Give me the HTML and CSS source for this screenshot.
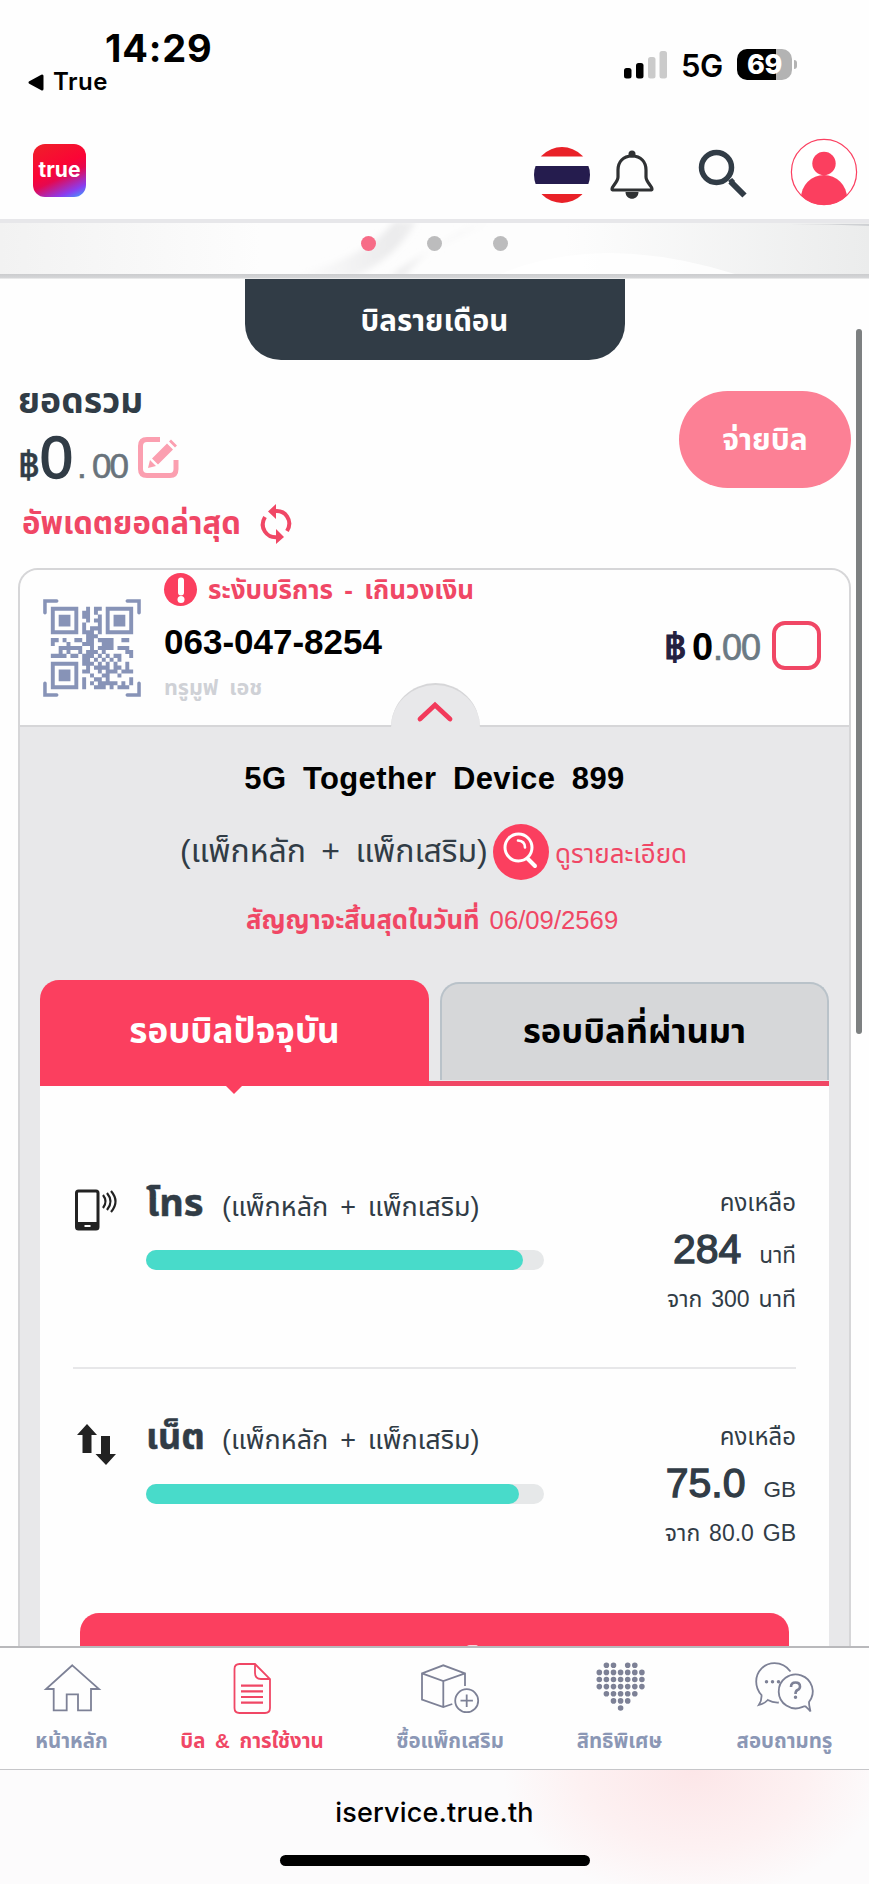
FILE: index.html
```html
<!DOCTYPE html>
<html lang="th">
<head>
<meta charset="utf-8">
<title>iService</title>
<link rel="stylesheet" href="styles.css">
</head>
<body>
<div class="screen">
  <div class="status">
    <div class="status-left">
      <div class="clock">14:29</div>
      <div class="back"><svg width="16" height="17" viewBox="0 0 16 17"><path d="M14 2v13L2 8.500z" fill="#000" stroke="#000" stroke-width="3" stroke-linejoin="round"/></svg><span>True</span></div>
    </div>
    <div class="status-right">
      <svg class="signal" width="43" height="28" viewBox="0 0 43 28"><g fill="#000"><rect x="0" y="17" width="7.500" height="10.500" rx="2.500"/><rect x="12" y="12" width="7.500" height="15.500" rx="2.500"/></g><g fill="#cbcbcb"><rect x="24" y="6" width="7.500" height="21.500" rx="2.500"/><rect x="35.500" y="0" width="7.500" height="27.500" rx="2.500"/></g></svg>
      <span class="net">5G</span>
      <span class="battery">69</span><i class="nub"></i>
    </div>
  </div>

  <header class="header">
    <div class="logo">true</div>
    <svg class="flag" width="56" height="56" viewBox="0 0 56 56"><clipPath id="fc"><circle cx="28" cy="28" r="28"/></clipPath><g clip-path="url(#fc)"><path fill="#fff" d="M0 0h56v56H0z"/><path fill="#e92128" d="M0 0h56v9.500H0zM0 47h56v9H0z"/><path fill="#251c4e" d="M0 19h56v18H0z"/></g></svg>
    <svg class="bell" width="44" height="50" viewBox="0 0 44 50"><circle cx="22" cy="4" r="3.500" fill="#2f3133"/><path d="M22 6C13 6 8 12 8 20v7c0 5-6 9-6 12 0 1 1 1 2 1h36c1 0 2 0 2-1 0-3-6-7-6-12v-7C36 12 31 6 22 6z" fill="none" stroke="#2f3133" stroke-width="3.200"/><path d="M15.500 42h13c0 9-13 9-13 0z" fill="#2f3133"/></svg>
    <svg class="search" width="50" height="50" viewBox="0 0 50 50" fill="none" stroke="#313c46"><circle cx="18.500" cy="18.500" r="15" stroke-width="5.500"/><path d="M31 33l3-2 2 2" stroke-width="3"/><path d="M32.500 32.500l14 14" stroke-width="6"/></svg>
    <svg class="avatar" width="68" height="68" viewBox="0 0 68 68"><clipPath id="ac"><circle cx="34" cy="34" r="33"/></clipPath><circle cx="34" cy="34" r="32.600" fill="#fff" stroke="#fb4061" stroke-width="1.200"/><g fill="#fb3f5f" clip-path="url(#ac)"><circle cx="34" cy="25.500" r="11.700"/><circle cx="34" cy="60" r="23"/></g></svg>
  </header>

  <main class="main">
    <div class="banner">
      <svg class="silk" width="869" height="51" viewBox="0 0 869 51"><defs><linearGradient id="g1"><stop offset="0" stop-color="#f2f2f2"/><stop offset=".3" stop-color="#fdfdfd"/><stop offset=".65" stop-color="#fdfdfd"/><stop offset="1" stop-color="#ebecec"/></linearGradient><linearGradient id="g2"><stop offset="0" stop-color="#fff"/><stop offset=".5" stop-color="#ebebec"/><stop offset="1" stop-color="#fff"/></linearGradient><filter id="soft" x="-10%" y="-30%" width="120%" height="160%"><feGaussianBlur stdDeviation="3"/></filter></defs><path fill="url(#g1)" d="M0 0h869v51H0z"/><g filter="url(#soft)"><path fill="url(#g2)" d="M285 53Q360 40 395-2h22Q395 36 355 53zM390 53Q430 22 500-2h-20Q425 25 405 53z"/></g><path fill="#fff" fill-opacity=".8" d="M500 51q100-42 235 0z"/><path d="M790 1h79v2q-40-2-79-2z" fill="#cfd1d4"/></svg>
      <i class="dot on"></i><i class="dot"></i><i class="dot"></i>
    </div>
    <div class="rule"></div>
    <div class="bill-tab"><span>บิลรายเดือน</span></div>

    <section class="summary">
      <div class="summary-left">
        <div class="sum-title"><span>ยอดรวม</span></div>
        <div class="amount"><span class="baht">฿</span><span class="whole">0</span><span class="point">.</span><span class="cents">00</span>
          <svg width="41" height="41" viewBox="0 0 41 41" fill="none" stroke="#fb9fb0"><path d="M22 2.500H9Q2.500 2.500 2.500 9v23q0 6.500 6.500 6.500h23q6 0 6-6.500v-9" stroke-width="5"/><path d="M10 31l2-8 6 6z M14 21.500L29 6.500l6 6L20 27.500zM31 4.500l2-2 6 6-2 2z" fill="#fb9fb0" stroke="none"/></svg>
        </div>
        <div class="refresh"><span>อัพเดตยอดล่าสุด</span>
          <svg width="32" height="40" viewBox="0 0 32 40"><g fill="none" stroke="#f04765" stroke-width="4"><path d="M13 7.500C26 5 33 17 27 27"/><path d="M19 33C6 35 -1 23 5 13"/></g><path d="M8 7.500L16 0v15zM24 33l-8-8v15z" fill="#f04765"/></svg>
        </div>
      </div>
      <button class="pay"><span>จ่ายบิล</span></button>
    </section>

    <section class="card">
      <div class="card-head">
        <svg class="qr" width="98" height="98" viewBox="0 0 25 25" stroke="#8793b7" fill="none"><path stroke-width=".9" stroke-linecap="round" d="M.5 3.500V.5h3M21.500.5h3v3M24.500 21.500v3h-3M3.500 24.500h-3v-3"/><g transform="translate(2 2)"><path d="M.5.5h6v6h-6zM14.500.5h6v6h-6zM.5 14.500h6v6h-6z"/><path fill="#8793b7" stroke="none" d="M2 2h3v3H2zM16 2h3v3h-3zM2 16h3v3H2z"/><path stroke-width="1.040" d="M9 .5h1M11 .5h2M8 1.500h2M11 1.500h1M8 2.500h2M12 2.500h1M9 3.500h1M11 3.500h2M8 4.500h1M12 4.500h1M8 5.500h1M10 5.500h3M8 6.500h3M12 6.500h1M9 7.500h3M0 8.500h2M3 8.500h1M6 8.500h2M9 8.500h2M12 8.500h4M18 8.500h2M0 9.500h1M4 9.500h1M8 9.500h3M13 9.500h3M2 10.500h6M10 10.500h1M12 10.500h4M17 10.500h3M2 11.500h1M4 11.500h1M7 11.500h1M9 11.500h3M13 11.500h1M19 11.500h2M0 12.500h4M5 12.500h2M8 12.500h3M12 12.500h1M14 12.500h1M16 12.500h2M20 12.500h1M8 13.500h2M11 13.500h1M13 13.500h1M15 13.500h1M17 13.500h1M8 14.500h3M12 14.500h1M14 14.500h1M16 14.500h1M19 14.500h1M9 15.500h1M11 15.500h4M16 15.500h2M19 15.500h1M8 16.500h2M12 16.500h1M14 16.500h3M18 16.500h3M10 17.500h1M13 17.500h2M17 17.500h1M8 18.500h1M11 18.500h2M14 18.500h1M20 18.500h1M8 19.500h1M10 19.500h1M12 19.500h5M18 19.500h1M20 19.500h1M8 20.500h1M11 20.500h3M15 20.500h1M17 20.500h3"/></g></svg>
        <div class="info">
          <div class="alert"><svg width="33" height="33" viewBox="0 0 33 33"><circle cx="16.500" cy="16.500" r="16.500" fill="#fb3f5f"/><path d="M17 7.500v12" stroke="#fff" stroke-width="6" stroke-linecap="round"/><circle cx="17" cy="26.500" r="3.500" fill="#fff"/></svg><span>ระงับบริการ - เกินวงเงิน</span></div>
          <div class="number"><span>063-047-8254</span></div>
          <div class="owner"><span>ทรูมูฟ เอช</span></div>
        </div>
        <div class="price"><span class="p-baht">฿</span><span class="p-whole">0</span><span class="p-cents">.00</span></div>
        <i class="check"></i>
        <div class="bump"><svg width="36" height="22" viewBox="0 0 36 22"><path d="M3 18L18 4l15 14" fill="none" stroke="#f23a5b" stroke-width="4.800" stroke-linecap="round"/></svg></div>
      </div>

      <div class="panel">
        <div class="plan"><span>5G Together Device 899</span></div>
        <div class="pack"><span class="pack-name">(แพ็กหลัก + แพ็กเสริม)</span>
          <svg width="56" height="56" viewBox="0 0 56 56"><circle cx="28" cy="28" r="28" fill="#fb3f5f"/><g fill="none" stroke="#fff" stroke-linecap="round"><circle cx="25.500" cy="23.500" r="13.500" stroke-width="3"/><path d="M35 35l7 7" stroke-width="4"/><path d="M25 16.500q7 .5 7 7" stroke-width="2.600"/></g></svg>
          <span class="pack-link">ดูรายละเอียด</span></div>
        <div class="contract"><b>สัญญาจะสิ้นสุดในวันที่</b><span>06/09/2569</span></div>
        <div class="tabs">
          <div class="tab active"><span>รอบบิลปัจจุบัน</span></div>
          <div class="tab"><span>รอบบิลที่ผ่านมา</span></div>
        </div>
        <div class="usage">
          <div class="row">
            <svg class="ic" width="44" height="44" viewBox="0 0 44 44"><rect x="3.500" y="3" width="21.500" height="38" rx="2" fill="none" stroke="#222" stroke-width="3"/><path d="M3 34h22v7H3z" fill="#222"/><path d="M11.500 38h6" stroke="#fff" stroke-width="2"/><g fill="none" stroke="#222" stroke-width="2.200"><path d="M30 7q5 6.500 0 13"/><path d="M34 5q7 8.500 0 17"/><path d="M38 3q9 10.500 0 21"/></g></svg>
            <div class="mid"><div class="name"><b>โทร</b><span>(แพ็กหลัก + แพ็กเสริม)</span></div><div class="bar"><div class="fill" style="width:377px"></div></div></div>
            <div class="left"><div class="l1"><span>คงเหลือ</span></div><div class="l2"><b>284</b><span>นาที</span></div><div class="l3"><span>จาก 300 นาที</span></div></div>
          </div>
          <div class="row">
            <svg class="ic" width="44" height="44" viewBox="0 0 44 44" fill="#222"><path d="M14 2l10 11h-5.500v18h-9V13H4zM28 14h9v18h6L33 43 22.500 32H28z"/></svg>
            <div class="mid"><div class="name"><b class="net-name">เน็ต</b><span>(แพ็กหลัก + แพ็กเสริม)</span></div><div class="bar"><div class="fill" style="width:373px"></div></div></div>
            <div class="left"><div class="l1"><span>คงเหลือ</span></div><div class="l2"><b>75.0</b><span>GB</span></div><div class="l3"><span>จาก 80.0 GB</span></div></div>
          </div>
          <div class="cta"><i></i></div>
        </div>
      </div>
    </section>
  </main>

  <nav class="nav">
    <div><svg width="60" height="52" viewBox="0 0 60 52"><path d="M30.300 3.300L57 27h-8v21.300H36v-16H24.700v16h-13V27H4z"/></svg><span>หน้าหลัก</span></div>
    <div class="sel"><svg width="60" height="52" viewBox="0 0 60 52"><path d="M17.500 2H33l15 15v29q0 5-5 5H17.500q-5 0-5-5V7q0-5 5-5zM33 2v9q0 6 6 6h9"/><path stroke-width="2.200" d="M19 23.700h22M19 29.300h22M19 35h22M19 40.700h22"/></svg><span>บิล &amp; การใช้งาน</span></div>
    <div><svg width="60" height="52" viewBox="0 0 60 52"><path d="M32.300 42l-9 3L2 37.500V11.300l21.300-8L45 11.300V24M2 11.300L23.300 19 45 11.300M23.300 19v26"/><circle cx="46.700" cy="38.700" r="11.500"/><path d="M46.700 32.500v12.400M40.500 38.700h12.400"/></svg><span>ซื้อแพ็กเสริม</span></div>
    <div><svg width="60" height="52" viewBox="0 0 60 52"><path class="dots" d="M16.400 3.300h0m7.100 0h0m14.200 0h0m7.100 0h0M9.300 10.400h0m7.100 0h0m7.100 0h0m7.100 0h0m7.100 0h0m7.100 0h0m7.100 0h0M9.300 17.500h0m7.100 0h0m7.100 0h0m7.100 0h0m7.100 0h0m7.100 0h0m7.100 0h0M9.300 24.600h0m7.100 0h0m7.100 0h0m7.100 0h0m7.100 0h0m7.100 0h0m7.100 0h0M16.400 31.700h0m7.100 0h0m7.100 0h0m7.100 0h0m7.100 0h0M23.500 38.900h0m7.100 0h0m7.100 0h0M30.600 46h0"/></svg><span>สิทธิพิเศษ</span></div>
    <div><svg width="60" height="52" viewBox="0 0 60 52"><path d="M35.500 9.500C31 3.500 25.500 1.200 19.500 1.200 9 1.200 1.200 9.500 1.200 19.500c0 5.500 2 10 5.300 13.500.3 4-.7 7-2.700 10 4-1 6.200-2 9-5 3.500 2 7.500 2.700 11 2.500"/><path d="M50 44c1.500 1.500 3.500 3 5.500 5.500-.8-3.500-1.700-6.500-1.500-9.500a17 17 0 1 0-7 5.200l3-1.200"/><path stroke-width="3.500" stroke-linecap="round" d="M11.500 19.800h0M17.500 19.800h0M23.500 19.800h0M40.500 35.300h0"/><path stroke-width="2.600" d="M36 25q0-4.500 4.500-4.500T45 24.500q0 2.500-2.500 3.500-2 1-2 4"/></svg><span>สอบถามทรู</span></div>
  </nav>
  <footer class="url"><span>iservice.true.th</span><i></i></footer>
  <div class="scrollbar"></div>
</div>
</body>
</html>
```

FILE: styles.css
```css
* { box-sizing: border-box; }
body { margin: 0; }
.screen { position: relative; width: 869px; height: 1884px; overflow: hidden; background: #fefefe; color: #313c46; font-family: "Liberation Sans", "Noto Sans Thai", "Noto Sans", sans-serif; display: flex; flex-direction: column; }
span, b { white-space: pre; }
svg { display: block; flex: none; overflow: visible; }
i { display: block; flex: none; }

.status { height: 130px; flex: none; display: flex; justify-content: space-between; font-family: Inter, sans-serif; color: #000; }
.status-left { padding: 28px 0 0 28px; }
.clock { font-size: 38px; line-height: 40px; font-weight: 700; padding-left: 77px; letter-spacing: .8px; }
.back { display: flex; align-items: center; font-size: 24px; line-height: 28px; font-weight: 600; gap: 9px; letter-spacing: .5px; }
.status-right { display: flex; padding: 50px 72px 0 0; align-items: flex-start; }
.signal { margin: 1px 14px 0 0; }
.net { font-size: 31px; line-height: 32px; font-weight: 600; width: 56px; letter-spacing: -.5px; }
.battery { width: 55px; height: 31px; margin-top: -1px; border-radius: 10px; background: linear-gradient(90deg, #000 39px, #b3b3b3 39px); color: #fff; font-size: 27px; line-height: 31px; font-weight: 800; text-align: center; letter-spacing: -.3px; }
.nub { width: 3px; height: 9px; margin: 10px 0 0 2px; border-radius: 0 4px 4px 0; background: #b3b3b3; }

.header { height: 93px; flex: none; border-bottom: 4px solid #e7e7ea; display: flex; align-items: flex-start; padding: 0 10px 0 33px; }
.logo { width: 53px; height: 53px; margin-top: 14px; border-radius: 12px; background: linear-gradient(155deg, #ee2128 0%, #fb0436 45%, #e50850 60%, #8a3df0 84%, #35aaff 100%); color: #fff; font: 700 21px/51px Inter, sans-serif; text-align: center; }
.flag { margin: 17px 20px 0 448px; }
.bell { margin: 20px 44px 0 0; }
.search { margin: 19px 42px 0 0; }
.avatar { margin-top: 8px; }

.main { height: 1423px; flex: none; overflow: hidden; }
.banner { height: 51px; display: flex; align-items: flex-start; overflow: hidden; }
.silk { margin-right: -869px; }
.dot { width: 15px; height: 15px; border-radius: 50%; background: #bcbcbd; margin: 13px 51.200px 0 0; }
.dot.on { background: #f76c87; margin-left: 360.500px; }
.rule { height: 5px; background: linear-gradient(#cbccce, #d4d5d7 70%, #f3f3f3); }
.bill-tab { width: 380px; height: 81px; margin: 0 auto; border-radius: 0 0 36px 36px; background: #313c46; color: #fff; font-size: 29.500px; font-weight: 700; line-height: 83px; text-align: center; }
.summary { height: 208px; padding: 22px 18px 0; display: flex; justify-content: space-between; }
.sum-title { height: 40px; line-height: 38px; font-size: 35.500px; font-weight: 700; }
.amount { height: 60px; margin-top: 6px; line-height: 60px; display: flex; align-items: baseline; }
.baht { font-size: 37px; width: 22px; -webkit-text-stroke: .6px; }
.whole { font-size: 59px; width: 37px; -webkit-text-stroke: 1.600px; }
.point { font-size: 35px; width: 15px; color: #69737b; -webkit-text-stroke: .6px; }
.cents { font-size: 35px; width: 46px; color: #69737b; letter-spacing: -2px; -webkit-text-stroke: .6px; }
.refresh { height: 40px; margin: 16px 0 0 4px; line-height: 40px; display: flex; gap: 19px; font-size: 31px; font-weight: 700; color: #f04765; }
.pay { width: 172px; height: 97px; margin: 9px 0 0; padding: 0; border: 0; border-radius: 49px; background: #fc8095; color: #fff; font: 700 30px/97px "Liberation Sans", "Noto Sans Thai", sans-serif; }

.card { width: 833px; height: 1300px; margin-left: 18px; border: 2px solid #d6d6d8; border-radius: 20px; background: #e8e8ea; overflow: hidden; }
.card-head { position: relative; height: 157px; border-bottom: 2px solid #d6d6d8; background: #fefefe; display: flex; align-items: flex-start; padding: 0 28px 0 23px; }
.qr { margin: 29px 23px 0 0; }
.info { width: 330px; padding-top: 3px; }
.alert { display: flex; gap: 11px; height: 33px; line-height: 34px; font-size: 26px; word-spacing: 4px; font-weight: 700; color: #f04765; }
.number { margin-top: 16px; font-size: 35px; line-height: 40px; font-weight: 700; color: #000; }
.owner { margin-top: 11px; font-size: 21.500px; line-height: 30px; font-weight: 700; word-spacing: 5px; color: #cfd1d6; }
.price { margin: 53px 0 0 auto; line-height: 48px; display: flex; align-items: baseline; }
.p-baht { font-size: 38px; width: 28px; color: #24213f; -webkit-text-stroke: 1.200px; }
.p-whole { font-size: 38px; font-weight: 700; color: #000; width: 21px; }
.p-cents { font-size: 36px; color: #6c7a84; width: 50px; letter-spacing: -1px; -webkit-text-stroke: .7px; }
.check { width: 49px; height: 49px; margin: 51px 0 0 9px; border: 4px solid #f04765; border-radius: 13px; }
.bump { position: absolute; left: 370.500px; top: 113px; width: 89px; height: 46px; border-radius: 45px 45px 0 0; background: #e8e8ea; border-top: 2px solid #d6d6d8; display: flex; justify-content: center; padding-top: 16px; }

.panel { padding: 31px 20px 0; }
.plan { text-align: center; font-size: 31px; line-height: 41px; height: 40px; font-weight: 700; color: #000; letter-spacing: .4px; word-spacing: 7.500px; }
.pack { display: flex; height: 56px; margin: 26px 0 0 140px; line-height: 55px; }
.pack-name { font-size: 32px; width: 313px; word-spacing: 6.500px; }
.pack-link { font-size: 26px; margin-left: 6px; color: #f04765; line-height: 60px; }
.contract { margin: 20px 0 0 206px; height: 40px; line-height: 40px; display: flex; gap: 10px; font-size: 25.700px; color: #f04765; }
.tabs { margin-top: 40px; height: 106px; border-bottom: 5px solid #f04765; display: flex; justify-content: space-between; }
.tab { width: 389px; height: 98px; margin-top: 2px; border: 2px solid #b9c2c9; border-bottom: 0; border-radius: 19px 19px 0 0; background: #d6d7d9; color: #000; font-size: 34.500px; font-weight: 700; text-align: center; line-height: 95px; }
.tab.active { position: relative; height: 106px; margin: 0; border: 0; background: #fb3f5f; color: #fff; line-height: 102px; font-size: 35px; }
.tab.active::after { content: ""; position: absolute; left: 185px; top: 105px; border: 9px solid transparent; border-top-color: #fb3f5f; border-bottom: 0; }
.usage { height: 800px; padding: 102px 33px 0; background: #fefefe; }
.row { display: flex; height: 181px; border-bottom: 2px solid #e7e7e9; }
.row + .row { height: 244px; padding-top: 53px; border: 0; }
.ic { margin-right: 29px; }
.mid { width: 398px; margin-top: -10px; }
.name { height: 50px; line-height: 50px; display: flex; align-items: baseline; font-size: 27px; word-spacing: 4.400px; }
.name b { font-size: 38px; width: 76px; -webkit-text-stroke: .5px; }
.name .net-name { font-size: 36px; }
.bar { margin-top: 22px; height: 20px; border-radius: 10px; background: #e6e8e9; }
.fill { height: 20px; border-radius: 10px; background: #48dbca; }
.left { margin-left: auto; text-align: right; font-size: 24px; line-height: 30px; display: flex; flex-direction: column; align-items: flex-end; }
.l2 { height: 50px; margin: 6px 0 10px; line-height: 50px; display: flex; align-items: baseline; gap: 18px; font-size: 22.500px; }
.l2 b { font-size: 41px; font-weight: 400; -webkit-text-stroke: 1.300px; }
.l3 { font-size: 23px; word-spacing: 2.500px; }
.cta { height: 60px; margin: 0 7px; border-radius: 19px 19px 0 0; background: #fb3f5f; display: flex; padding: 32px 0 0 386px; }
.cta i { width: 12px; height: 6px; border-radius: 4px 2px 0 0; background: #fbd5dc; }

.nav { height: 123px; flex: none; border-top: 2px solid #b9b9bc; background: #fefefe; display: grid; grid-template-columns: 143px 218px 178px 161px 169px; padding-top: 14px; }
.nav div { display: flex; flex-direction: column; align-items: center; color: #8b97b5; font-size: 20.400px; line-height: 30px; font-weight: 700; gap: 12px; }
.nav svg { fill: none; stroke: #7d8196; stroke-width: 1.800; }
.nav .sel { color: #f04765; word-spacing: 4px; }
.nav .sel svg { stroke: #f04765; }
.nav .dots { stroke-width: 5.600; stroke-linecap: round; }
.url { height: 115px; flex: none; border-top: 1px solid #c6c6c9; background: radial-gradient(ellipse 190px 130px at 693px 0, #fce6e8, #fdf1f2 60%, #fcfbfc00), #fcfbfc; display: flex; flex-direction: column; align-items: center; color: #000; font: 500 27px/34px Inter, sans-serif; padding-top: 26px; letter-spacing: .2px; }
.url i { width: 310px; height: 11px; margin-top: 25px; border-radius: 6px; background: #000; }
.scrollbar { position: absolute; left: 856px; top: 329px; width: 6px; height: 705px; border-radius: 3px; background: #7d8081; }
```
